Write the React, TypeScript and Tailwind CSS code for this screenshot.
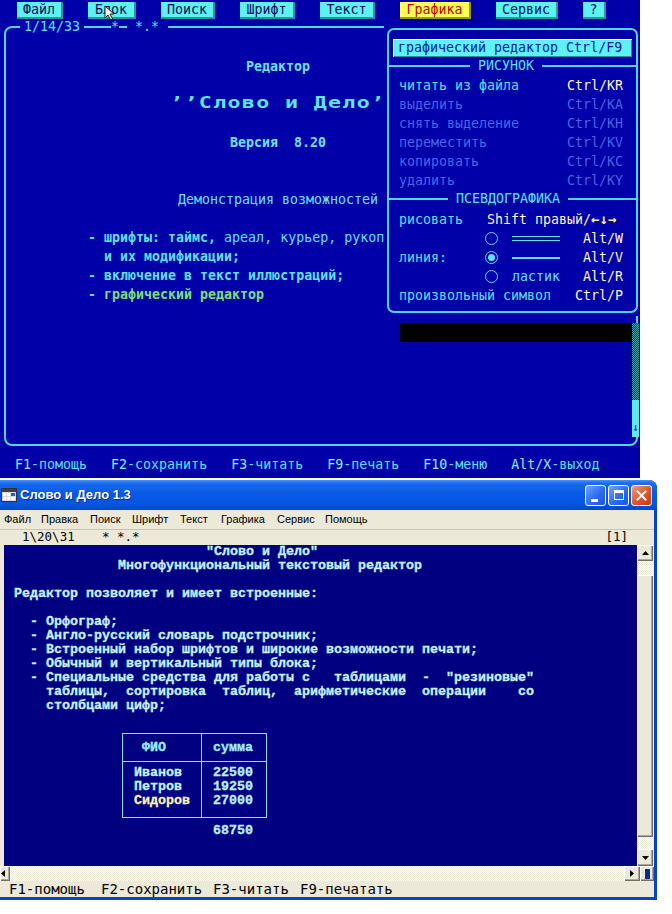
import React from "react";

const DOS_BLUE = "bg-[#0000a8]";

type MenuItem = { label: string; w: string; active?: boolean };

const dosMenu: MenuItem[] = [
  { label: "Файл", w: "w-[46px]" },
  { label: "Блок", w: "w-[48px]" },
  { label: "Поиск", w: "w-[54px]" },
  { label: "Шрифт", w: "w-[55px]" },
  { label: "Текст", w: "w-[55px]" },
  { label: "Графика", w: "w-[71px]", active: true },
  { label: "Сервис", w: "w-[62px]" },
  { label: "?", w: "w-[23px]" },
];

function DosButton({ item }: { item: MenuItem }) {
  return (
    <div
      className={`${item.w} h-[17px] flex items-center justify-center pr-[2px] pb-[1px] leading-none ${
        item.active
          ? "bg-[#ffff55] text-[#c40000] shadow-[inset_-2px_-2px_0_#9c9628]"
          : "bg-[#5cf2f2] text-[#0a0a5a] shadow-[inset_-2px_-2px_0_#2794a8]"
      }`}
    >
      {item.label}
    </div>
  );
}

function Sep({ label, left }: { label: string; left: string }) {
  return (
    <div className="flex items-center h-[17px]">
      <div className={`${left} h-[2px] bg-[#4ed6ee]`} />
      <span className="px-[8px] leading-[17px] text-[#5fe1f3]">{label}</span>
      <div className="flex-1 h-[2px] bg-[#4ed6ee]" />
    </div>
  );
}

function MenuRow({ label, keys, on }: { label: string; keys: string; on?: boolean }) {
  return (
    <div className="flex justify-between h-[19px] leading-[19px]">
      <span className={on ? "text-[#5fe1f3]" : "text-[#4a64e6]"}>{label}</span>
      <span className={on ? "text-[#fff6d2]" : "text-[#4a64e6]"}>{keys}</span>
    </div>
  );
}

function Radio({ checked }: { checked?: boolean }) {
  return (
    <div className="w-[13px] h-[13px] rounded-full border-[1.5px] border-[#5fe1f3] flex items-center justify-center">
      {checked && <div className="w-[7px] h-[7px] rounded-full bg-[#5fe1f3]" />}
    </div>
  );
}

function GraphicsMenu() {
  return (
    <div className={`absolute left-[384px] top-[24px] w-[256px] h-[292px] ${DOS_BLUE} pl-[3px] pt-[4px]`}>
      <div className="w-[251px] h-[285px] border-2 border-[#4ed6ee] rounded-[7px] flex flex-col">
        <div className="mt-[9px] mx-[4px] h-[18px] leading-[18px] pl-[5px] bg-[#5ef2f4] text-[#0a1a9a] whitespace-pre shadow-[inset_1px_1px_0_#ffffff,inset_-1px_-1px_0_#2a8aa0]">
          графический редактор Ctrl/F9
        </div>
        <Sep label="РИСУНОК" left="w-[81px]" />
        <div className="mt-[2px] flex flex-col pl-[10px] pr-[13px]">
          <MenuRow label="читать из файла" keys="Ctrl/KR" on />
          <MenuRow label="выделить" keys="Ctrl/KA" />
          <MenuRow label="снять выделение" keys="Ctrl/KH" />
          <MenuRow label="переместить" keys="Ctrl/KV" />
          <MenuRow label="копировать" keys="Ctrl/KC" />
          <MenuRow label="удалить" keys="Ctrl/KY" />
        </div>
        <Sep label="ПСЕВДОГРАФИКА" left="w-[59px]" />
        <div className="mt-[3px] flex flex-col pl-[10px] pr-[13px] text-[#5fe1f3]">
          <div className="flex h-[19px] leading-[19px]">
            <span className="w-[88px]">рисовать</span>
            <span className="text-[#fff6d2] whitespace-pre">Shift правый/</span>
            <span className="text-[#fff0a0] font-bold text-[14px]">←↓→</span>
          </div>
          <div className="flex items-center h-[19px] leading-[19px]">
            <span className="w-[86px]" />
            <Radio />
            <div className="ml-[14px] w-[48px] h-[5px] border-y border-[#5fe1f3]" />
            <span className="flex-1" />
            <span className="text-[#fff6d2]">Alt/W</span>
          </div>
          <div className="flex items-center h-[19px] leading-[19px]">
            <span className="w-[86px]">линия:</span>
            <Radio checked />
            <div className="ml-[14px] w-[48px] h-[2px] bg-[#5fe1f3]" />
            <span className="flex-1" />
            <span className="text-[#fff6d2]">Alt/V</span>
          </div>
          <div className="flex items-center h-[19px] leading-[19px]">
            <span className="w-[86px]" />
            <Radio />
            <span className="ml-[14px]">ластик</span>
            <span className="flex-1" />
            <span className="text-[#fff6d2]">Alt/R</span>
          </div>
          <div className="flex justify-between h-[19px] leading-[19px]">
            <span>произвольный символ</span>
            <span className="text-[#fff6d2]">Ctrl/P</span>
          </div>
        </div>
      </div>
    </div>
  );
}

function DosScreen() {
  const fkeys = [
    ["F1", "-помощь"],
    ["F2", "-сохранить"],
    ["F3", "-читать"],
    ["F9", "-печать"],
    ["F10", "-меню"],
    ["Alt/X", "-выход"],
  ];
  return (
    <div
      className={`relative w-[640px] h-[478px] ${DOS_BLUE} font-['DejaVu_Sans_Mono',monospace] text-[13.3px] text-[#5fe1f3]`}
    >
      {/* top menu */}
      <div className="flex h-[26px] pt-[2px] pl-[17px] gap-[25px]">
        {dosMenu.map((m) => (
          <DosButton key={m.label} item={m} />
        ))}
      </div>

      {/* mouse pointer over the menu */}
      <svg className="absolute left-[104px] top-[5px]" width="11" height="16" viewBox="0 0 11 16">
        <path d="M1 1 L1 13 L4 10 L6.5 15 L8.5 14 L6 9 L10 9 Z" fill="#f4f4f4" stroke="#202020" strokeWidth="1" />
      </svg>

      {/* document frame */}
      <div className="relative ml-[4px] w-[634px] h-[420px] border-2 border-[#4ed6ee] rounded-[8px]">
        <div className="absolute top-[-9px] left-[14px] flex h-[16px] leading-[16px]">
          <span className={`w-[64px] pl-[4px] ${DOS_BLUE}`}>1/14/33</span>
          <span className="w-[27px]" />
          <span className={`w-[8px] ${DOS_BLUE}`}>*</span>
          <span className="w-[8px]" />
          <span className={`w-[41px] pl-[8px] ${DOS_BLUE}`}>*.*</span>
        </div>

        <div className="w-[544px] flex flex-col">
          <div className="mt-[29px] h-[19px] leading-[19px] text-center font-bold text-[#6de2f5]">Редактор</div>
          <div className="mt-[15px] h-[24px] leading-[24px] text-center">
            <span className="inline-block text-[16px] font-bold tracking-[1px] scale-x-[1.35] text-[#5fe4f4]">
              ’’Слово и Дело’
            </span>
          </div>
          <div className="mt-[18px] h-[19px] leading-[19px] text-center font-bold whitespace-pre text-[#6de2f5]">
            Версия  8.20
          </div>
          <div className="mt-[38px] h-[19px] leading-[19px] text-center whitespace-pre text-[#6de2f5]">
            Демонстрация возможностей
          </div>
          <div className="mt-[19px] pl-[82px] flex flex-col whitespace-pre">
            <div className="h-[19px] leading-[19px]">
              <span className="font-bold">- шрифты: таймс,</span>
              <span> ареал, курьер, рукописный</span>
            </div>
            <div className="h-[19px] leading-[19px] font-bold">  и их модификации;</div>
            <div className="h-[19px] leading-[19px] font-bold">- включение в текст иллюстраций;</div>
            <div className="h-[19px] leading-[19px] font-bold">
              - <span className="text-[#74e47a]">графический редактор</span>
            </div>
          </div>
        </div>
      </div>

      {/* function key hints */}
      <div className="mt-[9px] h-[19px] leading-[19px] pl-[15px] flex gap-[24px]">
        {fkeys.map(([k, t]) => (
          <span key={k}>
            <span className="text-[#8ef0ff]">{k}</span>
            {t}
          </span>
        ))}
      </div>

      <GraphicsMenu />

      {/* black strip */}
      <div className="absolute left-[400px] top-[323px] w-[232px] h-[19px] bg-black" />

      {/* vertical scroll indicator */}
      <div className="absolute left-[632px] top-[323px] w-[7px] flex flex-col">
        <div className="h-[77px] bg-[repeating-conic-gradient(#3aa8a8_0%_25%,#0a1c8c_0%_50%)] bg-[length:2px_2px]" />
        <div className="h-[18px] bg-[#5ee8f2]" />
        <div className="h-[19px] bg-[#5ee8f2] flex items-center justify-center text-[11px] leading-none text-[#1a58c8] font-bold">
          ↓
        </div>
      </div>
    </div>
  );
}

const xpMenu = [
  { label: "Файл", w: "w-[37px]" },
  { label: "Правка", w: "w-[49px]" },
  { label: "Поиск", w: "w-[42px]" },
  { label: "Шрифт", w: "w-[48px]" },
  { label: "Текст", w: "w-[41px]" },
  { label: "Графика", w: "w-[56px]" },
  { label: "Сервис", w: "w-[48px]" },
  { label: "Помощь", w: "" },
];

const editorLines = [
  '                        "Слово и Дело"',
  "             Многофункциональный текстовый редактор",
  "",
  "Редактор позволяет и имеет встроенные:",
  "",
  "  - Орфограф;",
  "  - Англо-русский словарь подстрочник;",
  "  - Встроенный набор шрифтов и широкие возможности печати;",
  "  - Обычный и вертикальный типы блока;",
  '  - Специальные средства для работы с   таблицами  -  "резиновые"',
  "    таблицы,  сортировка  таблиц,  арифметические  операции    со",
  "    столбцами цифр;",
];

const classicBtn =
  "bg-[#ece9d8] shadow-[inset_1px_1px_0_#ffffff,inset_-1px_-1px_0_#716f64,inset_-2px_-2px_0_#aca899] flex items-center justify-center";

function Tri({ dir }: { dir: "up" | "down" | "left" | "right" }) {
  const pts = {
    up: "0,4 7,4 3.5,0",
    down: "0,0 7,0 3.5,4",
    left: "4,0 4,7 0,3.5",
    right: "0,0 0,7 4,3.5",
  }[dir];
  const vertical = dir === "up" || dir === "down";
  return (
    <svg width={vertical ? 7 : 4} height={vertical ? 4 : 7} viewBox={vertical ? "0 0 7 4" : "0 0 4 7"}>
      <polygon points={pts} fill="#000" />
    </svg>
  );
}

function XpWindow() {
  return (
    <div className="w-[657px] h-[420px] flex flex-col bg-[#0842cc] rounded-tr-[8px] overflow-hidden">
      {/* title bar */}
      <div className="h-[30px] flex items-center bg-[linear-gradient(180deg,#4a94fb_0%,#1c6cf0_10%,#0858e6_45%,#0656e2_80%,#0446cc_100%)] text-white">
        <svg className="ml-[1px]" width="16" height="16" viewBox="0 0 16 16">
          <rect x="0.5" y="1.5" width="15" height="13" fill="#d8d8d8" stroke="#303030" />
          <rect x="1" y="2" width="14" height="3" fill="#404040" />
          <rect x="2" y="6" width="3" height="3" fill="#ffffff" />
          <rect x="6" y="6" width="3" height="3" fill="#ffffff" />
          <rect x="10" y="6" width="4" height="3" fill="#2c5cd8" />
          <rect x="2" y="10" width="3" height="3" fill="#ffffff" />
          <rect x="6" y="10" width="3" height="3" fill="#ffffff" />
          <rect x="10" y="10" width="4" height="3" fill="#ffffff" />
        </svg>
        <span className="ml-[3px] font-['Liberation_Sans',sans-serif] text-[13px] font-bold [text-shadow:1px_1px_0_#0a2a80]">
          Слово и Дело 1.3
        </span>
        <div className="ml-auto mr-[5px] flex gap-[2px]">
          <div className="w-[21px] h-[21px] rounded-[3px] border border-white bg-[linear-gradient(135deg,#6fa4ff_0%,#2a6cf2_55%,#1a54d8_100%)] relative">
            <div className="absolute left-[5px] top-[13px] w-[7px] h-[3px] bg-white" />
          </div>
          <div className="w-[21px] h-[21px] rounded-[3px] border border-white bg-[linear-gradient(135deg,#6fa4ff_0%,#2a6cf2_55%,#1a54d8_100%)] flex items-center justify-center">
            <div className="w-[10px] h-[10px] border border-white border-t-[3px]" />
          </div>
          <div className="w-[21px] h-[21px] rounded-[3px] border border-white bg-[linear-gradient(135deg,#f0a080_0%,#e2582e_50%,#c23a14_100%)] flex items-center justify-center">
            <svg width="11" height="11" viewBox="0 0 11 11">
              <path d="M1.5 1.5 L9.5 9.5 M9.5 1.5 L1.5 9.5" stroke="#fff" strokeWidth="2" strokeLinecap="square" />
            </svg>
          </div>
        </div>
      </div>

      <div className="flex">
        <div className="w-[654px] h-[387px] flex flex-col bg-[#ece9d8]">
          {/* menu bar */}
          <div className="h-[19px] flex items-center pl-[4px] font-['Liberation_Sans',sans-serif] text-[11px] text-black">
            {xpMenu.map((m) => (
              <span key={m.label} className={m.w}>
                {m.label}
              </span>
            ))}
          </div>
          {/* position line */}
          <div className="h-[16px] flex items-center border-t border-[#c8c4b4] font-['DejaVu_Sans_Mono',monospace] text-[12.5px] text-black whitespace-pre">
            <span className="pl-[22px] w-[102px]">1\20\31</span>
            <span>* *.*</span>
            <span className="ml-auto mr-[26px]">[1]</span>
          </div>
          {/* editing area */}
          <div className="h-[321px] flex">
            <div className="w-[4px]" />
            <div className="w-[633px] bg-[#000080] pl-[10px] font-['Liberation_Mono',monospace] font-bold text-[13.33px] leading-[14px] text-[#c8f4ff] [-webkit-text-stroke:0.3px_#c8f4ff] overflow-hidden">
              {editorLines.map((l, i) => (
                <div key={i} className="h-[14px] whitespace-pre">
                  {l}
                </div>
              ))}
              <div className="mt-[20px] ml-[108px] w-[145px] h-[85px] border border-[#98dcf0] flex">
                <div className="w-[79px] border-r border-[#98dcf0] flex flex-col">
                  <div className="h-[28px] border-b border-[#98dcf0] pl-[19px] flex items-center text-[#86f0ff]">ФИО</div>
                  <div className="pt-[4px] pl-[11px] flex flex-col">
                    <div className="h-[14px]">Иванов</div>
                    <div className="h-[14px]">Петров</div>
                    <div className="h-[14px] text-[#fff2b8] [-webkit-text-stroke:0.3px_#fff2b8]">Сидоров</div>
                  </div>
                </div>
                <div className="flex-1 flex flex-col">
                  <div className="h-[28px] border-b border-[#98dcf0] pl-[11px] flex items-center text-[#86f0ff]">сумма</div>
                  <div className="pt-[4px] pl-[11px] flex flex-col text-[#b8f0ff]">
                    <div className="h-[14px]">22500</div>
                    <div className="h-[14px]">19250</div>
                    <div className="h-[14px]">27000</div>
                  </div>
                </div>
              </div>
              <div className="mt-[6px] ml-[199px] h-[14px] text-[#b8f0ff]">68750</div>
            </div>
            {/* vertical scrollbar */}
            <div className="w-[16px] flex flex-col">
              <div className={`h-[16px] ${classicBtn}`}>
                <Tri dir="up" />
              </div>
              <div className="flex-1 flex flex-col bg-[repeating-conic-gradient(#ffffff_0%_25%,#ece9d8_0%_50%)] bg-[length:2px_2px]">
                <div className="h-[14px]" />
                <div className={`h-[262px] ${classicBtn}`} />
              </div>
              <div className={`h-[17px] ${classicBtn}`}>
                <Tri dir="down" />
              </div>
            </div>
            <div className="w-[1px]" />
          </div>
          {/* horizontal scrollbar */}
          <div className="h-[15px] flex">
            <div className={`w-[10px] ${classicBtn} justify-start pl-[1px]`}>
              <Tri dir="left" />
            </div>
            <div className="w-[614px] bg-[repeating-conic-gradient(#ffffff_0%_25%,#ece9d8_0%_50%)] bg-[length:2px_2px]" />
            <div className={`w-[16px] ${classicBtn}`}>
              <Tri dir="right" />
            </div>
            <div className={`w-[14px] ${classicBtn}`}>
              <div className="w-[5px] h-[10px] bg-[#102a8a]" />
            </div>
          </div>
          {/* status line */}
          <div className="h-[16px] flex items-center pl-[9px] font-['DejaVu_Sans_Mono',monospace] text-[14px] text-black whitespace-pre">
            <span className="w-[92px]">F1-помощь</span>
            <span className="w-[112px]">F2-сохранить</span>
            <span className="w-[87px]">F3-читать</span>
            <span>F9-печатать</span>
          </div>
        </div>
      </div>
    </div>
  );
}

export default function App() {
  return (
    <div className="w-[672px] h-[914px] bg-white overflow-hidden">
      <DosScreen />
      <div className="h-[2px]" />
      <XpWindow />
    </div>
  );
}
